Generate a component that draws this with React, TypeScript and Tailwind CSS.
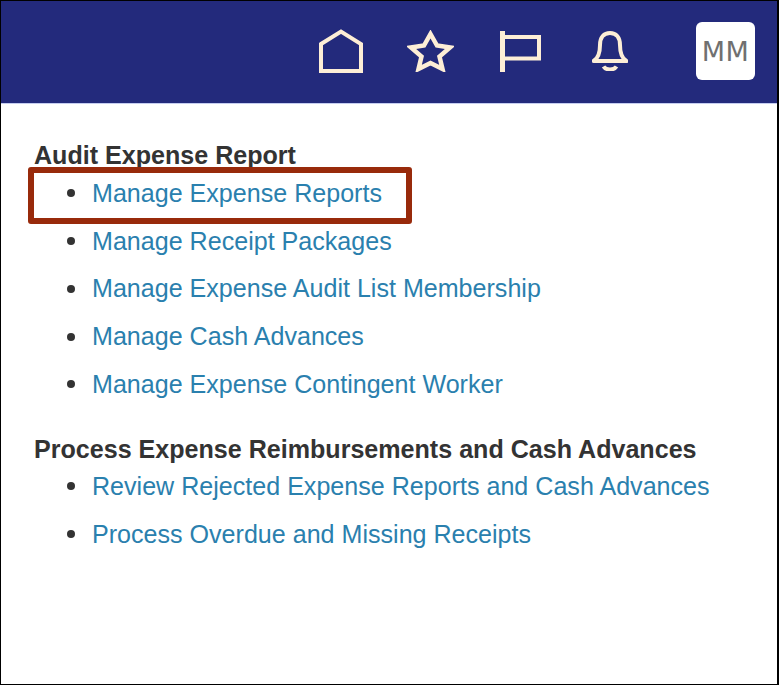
const auditLinks = [
  "Manage Expense Reports",
  "Manage Receipt Packages",
  "Manage Expense Audit List Membership",
  "Manage Cash Advances",
  "Manage Expense Contingent Worker",
];

const processLinks = [
  "Review Rejected Expense Reports and Cash Advances",
  "Process Overdue and Missing Receipts",
];

const LinkRow = ({ label, highlighted }: { label: string; highlighted?: boolean }) => (
  <li className="relative flex h-[47.75px] items-center">
    <span className="ml-[33px] h-2 w-2 rounded-full bg-[#333333]" />
    <a href="#" className="ml-[17px] text-[#2a80ae]">
      {label}
    </a>
    {highlighted && (
      <span className="absolute left-[-6px] top-[-2.5px] h-[57px] w-[384px] rounded-[3px] border-[6px] border-[#982a0b]" />
    )}
  </li>
);

const HomeIcon = () => (
  <svg width="44" height="44" viewBox="0 0 44 44" fill="none" stroke="#fdeed6" strokeWidth="4">
    <path d="M2 15 L22 2.5 L42 15 V42 H2 Z" />
  </svg>
);

const StarIcon = () => (
  <svg width="47" height="42" viewBox="0 0 47 42" fill="none" stroke="#fdeed6" strokeWidth="4.5">
    <path d="M23.5 4 L30 15.5 L43 17.5 L32.5 26.5 L35.5 39 L23.5 33 L11.5 39 L14.5 26.5 L4 17.5 L17 15.5 Z" />
  </svg>
);

const FlagIcon = () => (
  <svg width="41" height="41" viewBox="0 0 41 41" fill="none" stroke="#fdeed6" strokeWidth="4">
    <path d="M2.5 0 V41" strokeWidth="5" />
    <path d="M2 6 H39 V27.5 H2" />
  </svg>
);

const BellIcon = () => (
  <svg width="36" height="40" viewBox="0 0 36 40" fill="none" stroke="#fdeed6" strokeWidth="4">
    <path
      d="M1.5 30 H34.5 C29 27 28 21 28 14 C28 6 24 2 18 2 C12 2 8 6 8 14 C8 21 7 27 1.5 30 Z"
      strokeLinejoin="round"
    />
    <path d="M11.5 35.5 C14 39.5 22 39.5 24.5 35.5" />
  </svg>
);

export default function App() {
  return (
    <div className="flex h-[685px] w-[779px] flex-col border border-r-2 border-black bg-white font-['Liberation_Sans',Arial,sans-serif] text-[25.08px] leading-none">
      <header className="flex h-[103px] items-center border-b border-[#c5cdf0] bg-[#232a7c] pb-[2px] pl-[318px]">
        <HomeIcon />
        <div className="ml-[44px]"><StarIcon /></div>
        <div className="ml-[46px]"><FlagIcon /></div>
        <div className="ml-[51px]"><BellIcon /></div>
        <div className="ml-[68px] flex h-[58px] w-[59px] items-center justify-center rounded-md bg-white font-['DejaVu_Sans',sans-serif] text-[27px] tracking-[0.5px] text-[#707070]">
          MM
        </div>
      </header>

      <main className="pl-[33px] pt-[37px]">
        <h2 className="font-bold leading-[28px] text-[#333333]">Audit Expense Report</h2>
        <ul className="mt-[0.5px]">
          {auditLinks.map((label, i) => (
            <LinkRow key={label} label={label} highlighted={i === 0} />
          ))}
        </ul>
        <h2 className="mt-[26.75px] font-bold leading-[28px] text-[#333333]">
          Process Expense Reimbursements and Cash Advances
        </h2>
        <ul className="mt-[-0.4px]">
          {processLinks.map((label) => (
            <LinkRow key={label} label={label} />
          ))}
        </ul>
      </main>
    </div>
  );
}
